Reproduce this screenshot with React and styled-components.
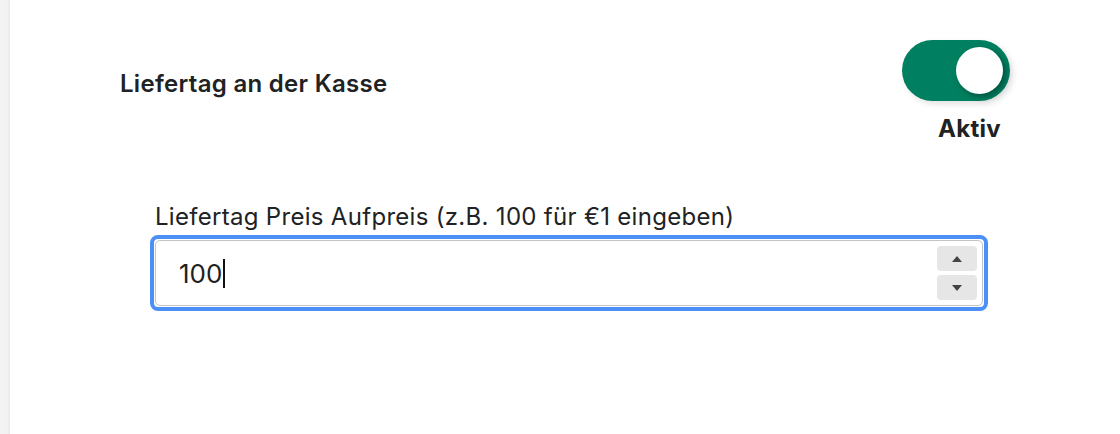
import styled, { createGlobalStyle } from "styled-components";

const Global = createGlobalStyle`
  html, body {
    margin: 0;
    padding: 0;
    background: #fff;
    font-family: Inter, "Noto Sans", "Liberation Sans", sans-serif;
    color: #202223;
  }
`;

const Page = styled.div`
  display: flex;
  width: 1120px;
  height: 434px;
  overflow: hidden;
`;

const SideStrip = styled.div`
  width: 10px;
  flex-shrink: 0;
  background: linear-gradient(to right, #f4f4f4, #f1f1f1 80%, #e6e6e6);
`;

const Content = styled.div`
  flex: 1;
  display: flex;
  flex-direction: column;
`;

const Header = styled.div`
  display: flex;
  justify-content: space-between;
  align-items: flex-start;
  padding: 40px 110px 0 110px;
`;

const Title = styled.h2`
  margin: 30px 0 0;
  font-size: 24px;
  line-height: 28px;
  font-weight: 600;
  letter-spacing: 0.3px;
`;

const ToggleBox = styled.div`
  display: flex;
  flex-direction: column;
  align-items: flex-end;
  gap: 14px;
`;

const Track = styled.button`
  position: relative;
  width: 108px;
  height: 61px;
  border: none;
  padding: 0;
  border-radius: 31px;
  background: ${(p) => (p.$on ? "#008060" : "#c9cccf")};
  box-shadow: 3px 3px 6px rgba(0, 0, 0, 0.12);
  cursor: pointer;
`;

const Knob = styled.span`
  position: absolute;
  top: 7px;
  left: ${(p) => (p.$on ? "54px" : "7px")};
  width: 47px;
  height: 47px;
  border-radius: 50%;
  background: #fff;
  box-shadow: 3px 3px 6px rgba(0, 0, 0, 0.35);
`;

const State = styled.span`
  font-size: 24px;
  line-height: 28px;
  font-weight: 700;
  letter-spacing: 0.3px;
  margin-right: 9px;
`;

const Field = styled.div`
  display: flex;
  flex-direction: column;
  gap: 3px;
  padding: 59px 0 0 140px;
  width: 838px;
`;

const Label = styled.label`
  font-size: 24px;
  line-height: 30px;
  font-weight: 400;
  letter-spacing: 0.3px;
  padding-left: 5px;
`;

const InputFrame = styled.div`
  display: flex;
  align-items: center;
  height: 76px;
  box-sizing: border-box;
  border: 4px solid #4c8ff7;
  border-radius: 8px;
  padding: 1px;
`;

const InputInner = styled.div`
  flex: 1;
  align-self: stretch;
  display: flex;
  align-items: center;
  justify-content: space-between;
  border: 1px solid #c4c4c4;
  border-radius: 5px;
  padding: 0 5px 0 23px;
`;

const Value = styled.div`
  display: flex;
  align-items: center;
  font-size: 26px;
  color: #1f1f1f;
`;

const Caret = styled.span`
  width: 1.5px;
  height: 29px;
  margin-left: 1px;
  background: #111;
`;

const Spinner = styled.div`
  display: flex;
  flex-direction: column;
  gap: 4px;
`;

const SpinButton = styled.button`
  width: 40px;
  height: 25px;
  border: none;
  border-radius: 4px;
  background: #e6e6e6;
  display: flex;
  align-items: center;
  justify-content: center;
  padding: 0;
`;

const Arrow = styled.span`
  width: 0;
  height: 0;
  border-left: 5px solid transparent;
  border-right: 5px solid transparent;
  ${(p) =>
    p.$up
      ? "border-bottom: 6px solid #444;"
      : "border-top: 6px solid #444;"}
`;

export default function App() {
  return (
    <Page>
      <Global />
      <SideStrip />
      <Content>
        <Header>
          <Title>Liefertag an der Kasse</Title>
          <ToggleBox>
            <Track $on aria-label="Liefertag an der Kasse">
              <Knob $on />
            </Track>
            <State>Aktiv</State>
          </ToggleBox>
        </Header>
        <Field>
          <Label>Liefertag Preis Aufpreis (z.B. 100 für €1 eingeben)</Label>
          <InputFrame>
            <InputInner>
              <Value>
                100
                <Caret />
              </Value>
              <Spinner>
                <SpinButton>
                  <Arrow $up />
                </SpinButton>
                <SpinButton>
                  <Arrow />
                </SpinButton>
              </Spinner>
            </InputInner>
          </InputFrame>
        </Field>
      </Content>
    </Page>
  );
}
